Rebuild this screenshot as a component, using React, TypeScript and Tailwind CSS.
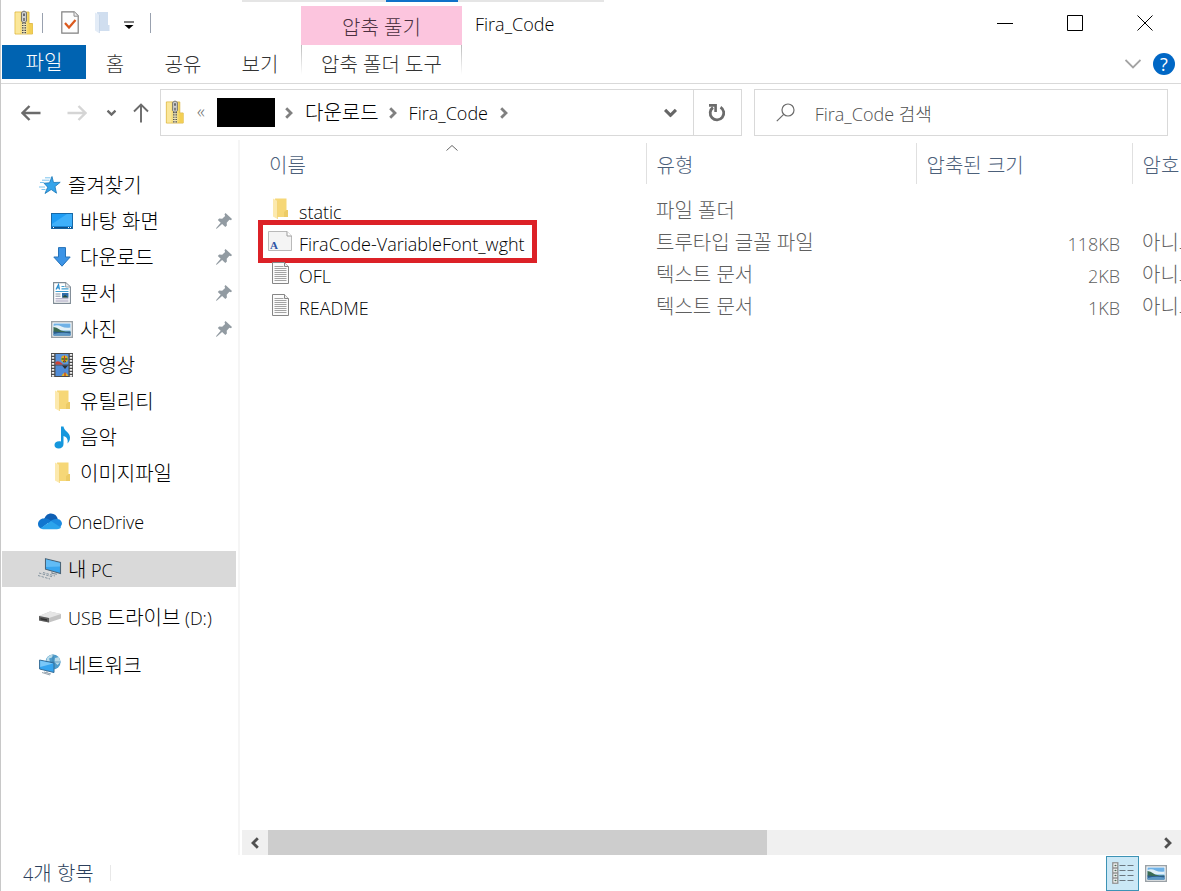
import React from 'react';

interface IconProps {
  className?: string;
}

interface PlaceItem {
  icon: React.FC<IconProps>;
  label: string;
  pinned?: boolean;
  selected?: boolean;
}

interface FileItem {
  icon: React.FC<IconProps>;
  name: string;
  type: string;
  size?: string;
  encrypted?: string;
  highlighted?: boolean;
}

/* ---------- icons ---------- */

const ZipFolderIcon: React.FC<IconProps> = ({ className }) => (
  <svg viewBox="0 0 20 26" className={className} aria-hidden="true">
    <path d="M1 2h14v11.500h3.500V24H1z" fill="#f7d968" stroke="#d9b13a" strokeWidth=".8" />
    <path d="M1.500 2.500h5v21h-5z" fill="#fbe79a" />
    <path d="M14.500 14v9.500h4V14z" fill="#f3cf55" />
    <path d="M7.500 12.500h5V24h-5z" fill="#efe3b0" />
    <path d="M10 12.500V24" stroke="#4a4a4a" strokeWidth="4" strokeDasharray="1.200 1.200" />
    <path d="M10 12.500V24" stroke="#e8e0bd" strokeWidth="1" />
    <path d="M7.500 2.500Q10-.5 12.500 2.500V11q-2.500 3.500-5 0z" fill="#cfcfcf" stroke="#6b6b6b" strokeWidth=".9" />
    <path d="M9 3.500h2v2.500H9zM9.200 8h1.600v3H9.200z" fill="#6a6a6a" />
  </svg>
);

const PropertiesIcon: React.FC<IconProps> = ({ className }) => (
  <svg viewBox="0 0 18 23" className={className} aria-hidden="true">
    <path d="M.8.800h12.400l4 4v17.400H.8z" fill="#fdfdfd" stroke="#808080" strokeWidth="1.200" />
    <path d="M13 .8v4.400h4.200" fill="#eee" stroke="#909090" />
    <path d="M4 12l4 4.500L14.500 9" fill="none" stroke="#db5a1e" strokeWidth="2.200" />
  </svg>
);

const PaleFolderIcon: React.FC<IconProps> = ({ className }) => (
  <svg viewBox="0 0 15 22" className={className} aria-hidden="true">
    <path d="M2 0h11v13h1.500v6H3z" fill="#d0deef" />
    <path d="M0 .5l4.500 2.500v18.500L0 18.500z" fill="#e3ecf7" />
    <path d="M4.500 3v18" stroke="#bccde2" strokeWidth=".6" />
  </svg>
);

const FolderIcon: React.FC<IconProps> = ({ className }) => (
  <svg viewBox="0 0 15 22" className={className} aria-hidden="true">
    <path d="M2 .5h11.500V12H15v7H3z" fill="#f6d777" />
    <path d="M13.500 12H15v7h-4v-5z" fill="#eccb66" />
    <path d="M0 .5l4.500 2.500v18L0 18.500z" fill="#fce9ad" />
    <path d="M4.500 3v18" stroke="#f0cd68" strokeWidth=".6" />
  </svg>
);

const StarIcon: React.FC<IconProps> = ({ className }) => (
  <svg viewBox="0 0 22 20" className={className} aria-hidden="true">
    <path
      d="M13 1.500l1.500 6 6.700-.2-5.200 4.300 1.500 6.600-5.300-3.700L6 18.500l2.700-6.300L5 8.200l5.500-.4z"
      fill="#35a4ea"
      stroke="#1b77b8"
      strokeWidth=".8"
    />
    <path d="M3 5.200h7.500M1 7.500h4M0 12h6M2.500 14.500h4M6 2.800h5.500" stroke="#5bb4ea" strokeWidth=".8" />
  </svg>
);

const DesktopIcon: React.FC<IconProps> = ({ className }) => (
  <svg viewBox="0 0 22 18" className={className} aria-hidden="true">
    <rect x=".5" y="1.500" width="21" height="15" fill="#1e9cf4" stroke="#1769a8" />
    <path d="M1 12L16 2h5v12H1z" fill="#3fb0fa" />
    <path d="M1 15.500h20" stroke="#0f4f86" strokeWidth="1.600" />
    <path d="M2 15.500h1M17 15.500h1M19 15.500h1" stroke="#fff" />
  </svg>
);

const DownloadIcon: React.FC<IconProps> = ({ className }) => (
  <svg viewBox="0 0 18 20" className={className} aria-hidden="true">
    <path d="M5.500.600h7v9.400h4.700L9 19.200.8 10h4.700z" fill="#3c94e6" stroke="#2672b8" />
  </svg>
);

const DocumentIcon: React.FC<IconProps> = ({ className }) => (
  <svg viewBox="0 0 18 22" className={className} aria-hidden="true">
    <path d="M.600.600h12l4.800 4.400v16.400H.600z" fill="#fff" stroke="#7e8a94" strokeWidth="1.100" />
    <path d="M12.600.800V5h4.600" fill="#e9eef2" stroke="#7e8a94" strokeWidth=".8" />
    <path d="M3 7.500l2.500-5 1 5M3.800 5.800h2.500" fill="none" stroke="#2b8fd0" strokeWidth="1.200" />
    <path d="M8.500 4.500h3M8.500 6.800h7M2.500 9.500h13" stroke="#3e9dcf" strokeWidth="1.200" />
    <path d="M2.500 12h5M2.500 14.200h5" stroke="#8493a3" />
    <path d="M2.500 16.800h13M2.500 19h13" stroke="#9a96b4" />
    <rect x="9" y="11" width="6.500" height="4.500" fill="#2f6da8" />
    <path d="M9 15.500l3-2.500 3.500 2.500z" fill="#294a35" />
  </svg>
);

const PictureIcon: React.FC<IconProps> = ({ className }) => (
  <svg viewBox="0 0 22 17" className={className} aria-hidden="true">
    <rect x=".7" y=".7" width="20.600" height="15.600" fill="#fff" stroke="#9aa1a6" strokeWidth="1.400" />
    <rect x="2.500" y="2.500" width="17" height="12" fill="#6fb1e6" />
    <path d="M2.500 5q4-1.500 8 .5t9 1v3h-17z" fill="#e2f0f7" />
    <path d="M2.500 6q3 .2 6 2.500t11 2v1h-17z" fill="#3b6b52" />
    <path d="M2.500 10.500q8 1 17 .2v3.800h-17z" fill="#2b5c8c" />
    <path d="M2.500 13q8-2 17-.5v2h-17z" fill="#5c97c4" />
  </svg>
);

const VideoIcon: React.FC<IconProps> = ({ className }) => (
  <svg viewBox="0 0 22 24" className={className} aria-hidden="true">
    <rect width="22" height="24" fill="#4a4a4a" />
    <path d="M2 1v23M20 1v23" stroke="#f0f0f0" strokeWidth="2.400" strokeDasharray="1.700 1.300" />
    <rect x="4.500" y="1" width="13" height="10.500" fill="#5b95dc" />
    <rect x="4.500" y="12.500" width="13" height="10.500" fill="#4f8bd6" />
    <path d="M4.500 9q3-2 6 1l2 1.500h-8z" fill="#cf4334" />
    <circle cx="13.500" cy="6" r="3.400" fill="#dcae25" />
    <path d="M10.500 6h6M12 8.500h3" stroke="#3a6d28" strokeWidth="1.400" />
    <path d="M13.500 2.700v6.500" stroke="#c23a28" />
    <path d="M11 12.500h6l-3 3.500z" fill="#2d2d2d" />
    <path d="M10.500 23q3.500-6.500 7 0z" fill="#e0b52a" />
    <path d="M14 19.500V23" stroke="#bf3c2a" strokeWidth="1.300" />
  </svg>
);

const MusicIcon: React.FC<IconProps> = ({ className }) => (
  <svg viewBox="0 0 17 23" className={className} aria-hidden="true">
    <path
      d="M7 .5h2.500c.5 4.500 6.500 6 6.500 11 0 3-1 4.500-2.500 6 .8-4-.5-6.500-4-7.500V18c0 2.800-2 4.500-4.800 4.500C2 22.500.5 21 .5 19c0-2.500 2.500-4.200 6.500-3.500z"
      fill="#1597dd"
    />
  </svg>
);

const OneDriveIcon: React.FC<IconProps> = ({ className }) => (
  <svg viewBox="0 0 24 17" className={className} aria-hidden="true">
    <path d="M6 7C7 2.500 10 .5 13 .5c3.500 0 6 2 7 6L12 11z" fill="#0f5fb4" />
    <path d="M5.500 5.500c3-.6 5 .5 7.500 2.200L3 15.500C1 14.500 0 13 0 11c0-3 2.500-5.500 5.500-5.500z" fill="#1176cf" />
    <path d="M12 8.500c2-2 4.500-2.800 7.500-2.500 3 .4 4.500 2.500 4.500 5l-2 4z" fill="#1c8be0" />
    <path d="M2.500 15.200L13 8l10 6.500c-1 1.200-2 1.700-4 1.700H6c-1.500 0-2.500-.3-3.500-1z" fill="#2ba4ec" />
  </svg>
);

const ComputerIcon: React.FC<IconProps> = ({ className }) => (
  <svg viewBox="0 0 24 22" className={className} aria-hidden="true">
    <path d="M7.500.800l15 3.700v11L7.500 11.200z" fill="#38a5ee" stroke="#4a6478" strokeWidth="1.100" />
    <path d="M8 1.500L22 5v3.500L8 9z" fill="#62bcf5" />
    <path d="M14 13.300v2l5 1" fill="none" stroke="#7d8c97" strokeWidth="1.100" />
    <path d="M1 15l13 3.700M0 17.500l12 3.500M5 14.500l12 3.500" stroke="#8796a1" strokeDasharray="2.500 1.200" />
  </svg>
);

const UsbDriveIcon: React.FC<IconProps> = ({ className }) => (
  <svg viewBox="0 0 22 12" className={className} aria-hidden="true">
    <path d="M0 5L11 .5l11 2.500v4.500L10 11.500 0 9.500z" fill="#c3c3c3" />
    <path d="M0 5L11 .5l11 2.500-12 4z" fill="#e6e6e6" />
    <path d="M0 5l10 2v4.500L0 9.500z" fill="#5b5b5b" />
    <path d="M1.500 7l6.500 1.300v1.500L1.500 8.500z" fill="#303030" />
  </svg>
);

const NetworkIcon: React.FC<IconProps> = ({ className }) => (
  <svg viewBox="0 0 22 22" className={className} aria-hidden="true">
    <circle cx="14" cy="8" r="7.600" fill="#4f9ccb" />
    <path d="M8 4q3-4 7-3.500l-2 3-3 1 1 3-4 1zM16 4l4-1 1.500 5-3 3-3-3z" fill="#b9dbe9" />
    <path d="M14 .5v15M6.500 8h15" stroke="#3479a8" strokeWidth=".6" />
    <path d="M.6 6l14.400 3v9.500L.6 15z" fill="#35a4ef" stroke="#356c96" />
    <path d="M1.200 6.800l13 2.700-13 3.500z" fill="#7bc8f8" />
    <path d="M8 17v2M3 18.500l8 2.500M5 18l7 2" stroke="#8a99a5" strokeWidth=".9" />
  </svg>
);

const PinIcon: React.FC<IconProps> = ({ className }) => (
  <svg viewBox="0 0 16 16" className={className} aria-hidden="true">
    <path d="M9.500 0L16 6l-1 1.200-1.600-.4-2.700 3 .2 2.700-1.600 1.600-3.200-3.200L1 15.500l-1 .5.400-1.200 4.300-5L1.800 7l1.400-1.500 3 .2 2.900-2.600-.6-1.900z" fill="#929ba2" />
  </svg>
);

const FontFileIcon: React.FC<IconProps> = ({ className }) => (
  <svg viewBox="0 0 24 20" className={className} aria-hidden="true">
    <path d="M.5.500h18.500l4.500 4.500v14.500H.5z" fill="#f4f4f4" stroke="#b9b9b9" />
    <path d="M19 .5V5h4.500" fill="#fff" stroke="#9c9c9c" />
    <text x="2" y="17.500" fontSize="11" fontWeight="bold" fontFamily="Liberation Serif, serif" fill="#2c53a4">A</text>
  </svg>
);

const TextFileIcon: React.FC<IconProps> = ({ className }) => (
  <svg viewBox="0 0 17 22" className={className} aria-hidden="true">
    <path d="M.500.500h12l4 4v17H.500z" fill="#fbfbfb" stroke="#868686" />
    <path d="M12.500.500v4h4" fill="#eee" stroke="#868686" />
    <path
      d="M2.500 4.500h9M2.500 6.500h12M2.500 8.500h12M2.500 10.500h12M2.500 12.500h12M2.500 14.500h12M2.500 16.500h12M2.500 18.500h12"
      stroke="#999"
      strokeWidth=".9"
    />
  </svg>
);

const BackIcon: React.FC<IconProps> = ({ className }) => (
  <svg viewBox="0 0 20 16" className={className} fill="none" stroke="currentColor" aria-hidden="true">
    <path d="M19.500 8H2M8.500 1l-7 7 7 7" strokeWidth="2.400" />
  </svg>
);

const UpIcon: React.FC<IconProps> = ({ className }) => (
  <svg viewBox="0 0 16 20" className={className} fill="none" stroke="currentColor" aria-hidden="true">
    <path d="M8 19.500V2M1 8.500l7-7 7 7" strokeWidth="1.900" />
  </svg>
);

const ChevronIcon: React.FC<IconProps> = ({ className }) => (
  <svg viewBox="0 0 8 12" className={className} fill="none" stroke="currentColor" aria-hidden="true">
    <path d="M1.200 1.200L6 6l-4.800 4.800" strokeWidth="2.800" />
  </svg>
);

const RefreshIcon: React.FC<IconProps> = ({ className }) => (
  <svg viewBox="0 0 18 18" className={className} fill="none" stroke="currentColor" aria-hidden="true">
    <path d="M12.500 3.200A6.800 6.800 0 1 1 5 3.500" strokeWidth="2.800" />
    <path d="M1 1.400h6.600V8" strokeWidth="2.600" />
  </svg>
);

const SearchIcon: React.FC<IconProps> = ({ className }) => (
  <svg viewBox="0 0 19 19" className={className} fill="none" stroke="currentColor" aria-hidden="true">
    <circle cx="12" cy="7" r="6" strokeWidth="1.200" />
    <path d="M7.700 11.300L.8 18.200" strokeWidth="1.200" />
  </svg>
);

const DetailsIcon: React.FC<IconProps> = ({ className }) => (
  <svg viewBox="0 0 22 22" className={className} aria-hidden="true">
    <rect x=".8" y=".8" width="5" height="20.400" fill="#fff" stroke="#8e8e8e" strokeWidth="1.300" />
    <path d="M1 6h5M1 11h5M1 16h5" stroke="#8e8e8e" strokeWidth="1.300" />
    <path d="M2.500 3.500h2M2.500 8.500h2M2.500 13.500h2M2.500 18.500h2" stroke="#4c6a57" strokeWidth="1.600" />
    <path d="M7.500 3.500h6M15.500 3.500h6M7.500 8.500h6M15.500 8.500h6M7.500 13.500h6M15.500 13.500h6M7.500 18.500h6M15.500 18.500h6" stroke="#6b7780" strokeWidth="1.200" />
  </svg>
);

/* ---------- data ---------- */

const quickAccess: PlaceItem[] = [
  { icon: DesktopIcon, label: '바탕 화면', pinned: true },
  { icon: DownloadIcon, label: '다운로드', pinned: true },
  { icon: DocumentIcon, label: '문서', pinned: true },
  { icon: PictureIcon, label: '사진', pinned: true },
  { icon: VideoIcon, label: '동영상' },
  { icon: FolderIcon, label: '유틸리티' },
  { icon: MusicIcon, label: '음악' },
  { icon: FolderIcon, label: '이미지파일' },
];

const places: PlaceItem[] = [
  { icon: OneDriveIcon, label: 'OneDrive' },
  { icon: ComputerIcon, label: '내 PC', selected: true },
  { icon: UsbDriveIcon, label: 'USB 드라이브 (D:)' },
  { icon: NetworkIcon, label: '네트워크' },
];

const files: FileItem[] = [
  { icon: FolderIcon, name: 'static', type: '파일 폴더' },
  {
    icon: FontFileIcon,
    name: 'FiraCode-VariableFont_wght',
    type: '트루타입 글꼴 파일',
    size: '118KB',
    encrypted: '아니요',
    highlighted: true,
  },
  { icon: TextFileIcon, name: 'OFL', type: '텍스트 문서', size: '2KB', encrypted: '아니요' },
  { icon: TextFileIcon, name: 'README', type: '텍스트 문서', size: '1KB', encrypted: '아니요' },
];

const iconSizes = new Map<React.FC<IconProps>, string>([
  [StarIcon, 'w-[22px] h-5'],
  [DesktopIcon, 'w-[22px] h-[18px]'],
  [DownloadIcon, 'w-[18px] h-5'],
  [DocumentIcon, 'w-[18px] h-[22px]'],
  [PictureIcon, 'w-[22px] h-[17px]'],
  [VideoIcon, 'w-[22px] h-6'],
  [FolderIcon, 'w-[15px] h-[22px]'],
  [MusicIcon, 'w-[17px] h-[23px]'],
  [OneDriveIcon, 'w-6 h-[17px]'],
  [ComputerIcon, 'w-6 h-[22px]'],
  [UsbDriveIcon, 'w-[22px] h-3'],
  [NetworkIcon, 'w-[22px] h-[22px]'],
  [FontFileIcon, 'w-6 h-5'],
  [TextFileIcon, 'w-[17px] h-[22px]'],
]);

/* ---------- pieces ---------- */

// Hangul is set larger than Latin so both have the same optical size
const Label: React.FC<{ text: string }> = ({ text }) => (
  <span className="inline-block align-middle pt-0.5 whitespace-pre font-light">
    {text.split(/([가-힣]+(?: [가-힣]+)*)/).map((part, i) => (
      <span key={i} className={i % 2 ? 'text-xl leading-6' : 'text-lg leading-6'}>
        {part}
      </span>
    ))}
  </span>
);

const PlaceRow: React.FC<PlaceItem & { nested?: boolean }> = ({ icon: Icon, label, pinned, selected, nested }) => (
  <a
    href="#"
    className={`flex items-center h-9 pr-1 mr-0.5 ${nested ? 'pl-12' : 'pl-9'} ${selected ? 'bg-[#d9d9d9]' : 'hover:bg-[#e5f3ff]'}`}
  >
    <span className="flex justify-center w-6 shrink-0 mr-1.5">
      <Icon className={iconSizes.get(Icon)} />
    </span>
    <Label text={label} />
    {pinned && <PinIcon className="w-4 h-4 ml-auto" />}
  </a>
);

const Ribbon: React.FC = () => (
  <header className="relative border-b border-[#d9d9d9]">
    <div className="absolute top-0 left-[241px] w-[362px] h-0.5 bg-[#e5e5e5]">
      <div className="h-0.5 w-[72px] ml-36 bg-[#0f72c9]" />
    </div>

    <div className="flex h-[45px]">
      <div className="flex items-center w-[300px] shrink-0 pl-[13px]">
        <ZipFolderIcon className="w-5 h-[26px]" />
        <div className="w-px h-5 bg-gray-400 ml-2" />
        <button aria-label="속성" className="ml-[18px]">
          <PropertiesIcon className="w-[18px] h-[23px]" />
        </button>
        <button aria-label="새 폴더" className="ml-4">
          <PaleFolderIcon className="w-[15px] h-[22px]" />
        </button>
        <button aria-label="빠른 실행 도구 모음 사용자 지정" className="ml-3.5 pt-1">
          <svg viewBox="0 0 10 8" className="w-2.5 h-2" aria-hidden="true">
            <path d="M0 .5h10v1H0zM.500 4h9L5 8z" />
          </svg>
        </button>
        <div className="w-px h-5 bg-gray-400 ml-4" />
      </div>
      <div className="flex items-center justify-center w-[161px] shrink-0 mt-1.5 pt-1 bg-[#fcc5de] text-[#4a3040]">
        <Label text="압축 풀기" />
      </div>
      <h1 className="flex items-center grow pl-[13px] pt-0.5 text-black">
        <Label text="Fira_Code" />
      </h1>
      <div className="flex items-center pr-px">
        <button aria-label="최소화" className="flex justify-center w-[70px]">
          <svg viewBox="0 0 16 16" className="w-4 h-4" stroke="#000"><path d="M0 8.500h16" /></svg>
        </button>
        <button aria-label="최대화" className="flex justify-center w-[70px]">
          <svg viewBox="0 0 16 16" className="w-4 h-4" stroke="#000" fill="none"><path d="M.5.500h15v15H.5z" /></svg>
        </button>
        <button aria-label="닫기" className="flex justify-center w-[70px]">
          <svg viewBox="0 0 16 16" className="w-4 h-4" stroke="#000"><path d="M.5.500l15 15M15.500.500l-15 15" /></svg>
        </button>
      </div>
    </div>

    <div className="flex h-[38px] text-[#333]">
      <div className="flex w-[300px] shrink-0 pl-px">
        <button className="w-[84px] h-[34px] bg-[#0063b1] text-white"><Label text="파일" /></button>
        <button className="h-[38px] w-[58px]"><Label text="홈" /></button>
        <button className="h-[38px] w-[78px]"><Label text="공유" /></button>
        <button className="h-[38px] w-[76px]"><Label text="보기" /></button>
      </div>
      <div className="w-px h-[30px] bg-linear-to-b from-[#bbb] to-white" />
      <button className="w-[159px] h-[38px]"><Label text="압축 폴더 도구" /></button>
      <div className="w-px h-[30px] bg-linear-to-b from-[#bbb] to-white" />
      <div className="flex items-center gap-3 ml-auto pr-1.5">
        <button aria-label="리본 확장">
          <svg viewBox="0 0 16 10" className="w-4 h-2.5" fill="none" stroke="#a3a3a3" strokeWidth="1.800">
            <path d="M.5 1L8 8.500 15.500 1" />
          </svg>
        </button>
        <button aria-label="도움말" className="flex items-center justify-center w-[22px] h-[22px] rounded-full bg-[#0067c5] text-white text-lg leading-none">
          ?
        </button>
      </div>
    </div>
  </header>
);

const AddressBar: React.FC = () => (
  <div className="flex items-center gap-3 pt-[5px] pb-1 pr-[13px]">
    <div className="flex grow items-center">
      <div className="flex items-center w-[159px] shrink-0 pl-5 text-[#6b6b6b]">
        <button aria-label="뒤로"><BackIcon className="w-5 h-4" /></button>
        <button aria-label="앞으로" disabled className="ml-[26px] text-[#d5d5d5]"><BackIcon className="w-5 h-4 -scale-x-100" /></button>
        <button aria-label="최근 위치" className="flex justify-center w-3 ml-[18px]"><ChevronIcon className="w-[7px] h-2.5 rotate-90" /></button>
        <button aria-label="위로" className="ml-4"><UpIcon className="w-4 h-5" /></button>
      </div>
      <nav aria-label="주소" className="flex grow h-[47px] border border-[#d9d9d9] text-black">
        <div className="flex grow items-center pl-1">
          <ZipFolderIcon className="w-5 h-[25px]" />
          <span className="w-8 pb-1 text-center text-lg text-[#6b6b6b] font-light">«</span>
          <div className="w-[58px] h-[29px] bg-black" />
          <ChevronIcon className="w-2 h-3 ml-2.5 text-[#808080]" />
          <a href="#" className="ml-3"><Label text="다운로드" /></a>
          <ChevronIcon className="w-2 h-3 ml-2.5 mr-3 text-[#808080]" />
          <a href="#"><Label text="Fira_Code" /></a>
          <ChevronIcon className="w-2 h-3 ml-3 text-[#808080]" />
          <button aria-label="이전 위치" className="flex justify-center w-4 ml-auto mr-[14px]">
            <ChevronIcon className="w-[9px] h-[14px] rotate-90 text-[#666]" />
          </button>
        </div>
        <button aria-label="새로 고침" className="flex items-center justify-center w-12 border-l border-[#d9d9d9] text-[#6b6b6b]">
          <RefreshIcon className="w-[18px] h-[18px]" />
        </button>
      </nav>
    </div>
    <label className="flex items-center w-[35.5%] h-[47px] shrink-0 border border-[#d9d9d9] pl-[21px]">
      <SearchIcon className="w-[19px] h-[19px] mr-5 text-[#6b6b6b]" />
      <input
        type="search"
        aria-label="Fira_Code 검색"
        placeholder="Fira_Code 검색"
        className="grow min-w-0 pt-0.5 text-lg font-light outline-none placeholder:text-[#505050]"
      />
    </label>
  </div>
);

const Sidebar: React.FC = () => (
  <nav aria-label="탐색 창" className="flex flex-col gap-3 w-[238px] ml-px shrink-0 pt-[27px] border-r-2 border-[#f5f5f5] text-black">
    <div>
      <PlaceRow icon={StarIcon} label="즐겨찾기" />
      {quickAccess.map((item) => (
        <PlaceRow key={item.label} {...item} nested />
      ))}
    </div>
    {places.map((item) => (
      <PlaceRow key={item.label} {...item} />
    ))}
  </nav>
);

const headClasses = 'h-[41px] p-0 pt-1 pl-2.5 text-left align-middle border-r border-[#e0e0e0] font-normal';

const FileTable: React.FC = () => (
  <div className="grow overflow-hidden pt-[3px]">
    <table className="table-fixed w-[1040px]">
      <colgroup>
        <col className="w-[406px]" />
        <col className="w-[270px]" />
        <col className="w-[216px]" />
        <col />
      </colgroup>
      <thead className="text-[#4c607a]">
        <tr>
          <th className="relative h-[41px] p-0 pt-1 pl-[29px] text-left align-middle border-r border-[#e0e0e0] font-normal">
            <Label text="이름" />
            <svg viewBox="0 0 12 6" className="absolute top-0.5 left-[206px] w-3 h-1.5" fill="none" stroke="#666">
              <path d="M.5 5.500L6 .500l5.500 5" />
            </svg>
          </th>
          <th className={headClasses}><Label text="유형" /></th>
          <th className={headClasses}><Label text="압축된 크기" /></th>
          <th className={headClasses}><Label text="암호" /></th>
        </tr>
      </thead>
      <tbody className="text-[#606060]">
        <tr className="h-2.5"><td colSpan={4} /></tr>
        {files.map(({ icon: Icon, name, type, size, encrypted, highlighted }) => (
          <tr key={name} className="h-8">
            <td className="p-0 pl-7 text-black">
              <span className="relative inline-flex items-center align-middle pt-0.5">
                <span className="flex justify-center w-6 mr-[7px] pb-1">
                  <Icon className={iconSizes.get(Icon)} />
                </span>
                <Label text={name} />
                {highlighted && (
                  <span className="absolute -left-2.5 -right-3 -top-2 -bottom-1.5 border-[5px] border-[#dc2127]" />
                )}
              </span>
            </td>
            <td className="p-0 pl-2.5"><Label text={type} /></td>
            <td className="p-0 pt-0.5 pr-3 text-right">{size && <Label text={size} />}</td>
            <td className="p-0 pl-2.5">{encrypted && <Label text={encrypted} />}</td>
          </tr>
        ))}
      </tbody>
    </table>
  </div>
);

const HorizontalScrollbar: React.FC = () => (
  <div className="flex items-center h-[25px] ml-0.5 bg-[#f0f0f0] text-[#505050]">
    <button aria-label="왼쪽으로 스크롤" className="flex justify-center w-[26px]">
      <ChevronIcon className="w-2 h-3 rotate-180" />
    </button>
    <div className="grow h-full">
      <div className="w-9/16 h-full bg-[#cdcdcd]" />
    </div>
    <button aria-label="오른쪽으로 스크롤" className="flex justify-center w-[26px]">
      <ChevronIcon className="w-2 h-3" />
    </button>
  </div>
);

export default function App() {
  return (
    <div className="flex flex-col min-h-screen bg-white border-l border-[#c8c8c8] overflow-hidden font-['Open_Sans','Noto_Sans_CJK_KR',sans-serif]">
      <Ribbon />
      <AddressBar />
      <main className="flex grow">
        <Sidebar />
        <div className="flex flex-col grow min-w-0">
          <FileTable />
          <HorizontalScrollbar />
        </div>
      </main>
      <footer className="flex items-center h-9 pl-[22px] pr-3.5 text-[#2b3f5c]">
        <Label text="4개 항목" />
        <div className="w-px h-4 ml-4 bg-[#e8e8e8]" />
        <div className="flex items-center gap-1.5 ml-auto">
          <button aria-label="자세히" className="flex items-center justify-center w-[33px] h-[35px] border border-[#3d93b5] bg-[#cbe8f6]">
            <DetailsIcon className="w-[22px] h-[22px]" />
          </button>
          <button aria-label="큰 아이콘">
            <PictureIcon className="w-[22px] h-[17px]" />
          </button>
        </div>
      </footer>
    </div>
  );
}
